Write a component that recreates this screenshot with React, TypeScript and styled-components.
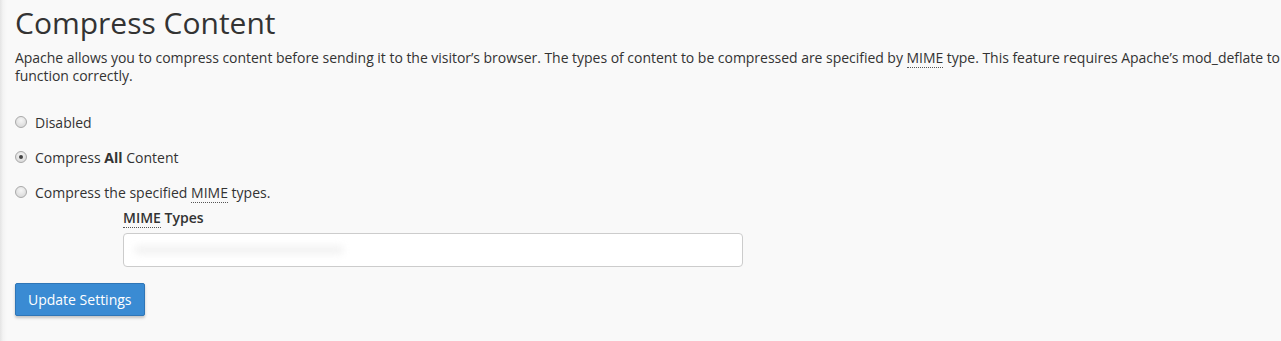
import React from "react";
import styled, { createGlobalStyle } from "styled-components";

const GlobalStyle = createGlobalStyle`
  html, body {
    margin: 0;
    padding: 0;
    overflow: hidden;
  }
  body {
    background: #f9f9f9;
    font-family: "Open Sans", "Liberation Sans", sans-serif;
    color: #333;
  }
`;

const Page = styled.div`
  width: 1281px;
  height: 341px;
  overflow: hidden;
  background: linear-gradient(to right, #e4e4e4 0px, #f3f3f3 3px, #f9f9f9 7px);
  padding: 0 0 0 15px;
  box-sizing: border-box;
`;

const Content = styled.div`
  width: 1300px;
`;

const Title = styled.h1`
  margin: 0;
  padding-top: 5px;
  font-size: 30px;
  font-weight: 400;
  line-height: 36px;
  color: #333;
`;

const Intro = styled.p`
  margin: 8px 0 0;
  font-size: 14px;
  line-height: 18px;
  letter-spacing: -0.03px;
`;

const Abbr = styled.abbr`
  text-decoration: none;
  border-bottom: 1px dotted #555;
  cursor: help;
`;

const Options = styled.div`
  display: flex;
  flex-direction: column;
  gap: 15px;
  margin-top: 27px;
`;

const Option = styled.label`
  display: flex;
  align-items: center;
  gap: 8px;
  height: 20px;
  font-size: 14px;
`;

const Radio = styled.span<{ $checked?: boolean }>`
  width: 10px;
  height: 10px;
  border-radius: 50%;
  border: 1px solid #a9a9a9;
  background: radial-gradient(circle at 50% 35%, #f6f6f6 0%, #d8d8d8 85%);
  display: flex;
  align-items: center;
  justify-content: center;
  &::after {
    content: "";
    display: ${(p) => (p.$checked ? "block" : "none")};
    width: 4px;
    height: 4px;
    border-radius: 50%;
    background: #444;
  }
`;

const Field = styled.div`
  margin: 6px 0 0 108px;
  display: flex;
  flex-direction: column;
  gap: 5px;
`;

const FieldLabel = styled.div`
  font-size: 14px;
  font-weight: 600;
  line-height: 20px;
`;

const TextBox = styled.div`
  box-sizing: border-box;
  width: 620px;
  height: 34px;
  border: 1px solid #ccc;
  border-radius: 4px;
  background: #fff;
  display: flex;
  align-items: center;
  padding-left: 10px;
`;

const Smudge = styled.span`
  width: 210px;
  height: 10px;
  border-radius: 5px;
  background: #f4f4f4;
  filter: blur(3px);
`;

const Button = styled.button`
  margin-top: 16px;
  height: 33px;
  padding: 0 12px;
  font-family: "Open Sans", "Liberation Sans", sans-serif;
  font-size: 14px;
  color: #fff;
  background: #3a8bd3;
  border: 1px solid #2f76b7;
  border-radius: 2px;
  box-shadow: 0 2px 3px rgba(0, 0, 0, 0.22);
`;

const App = () => {
  return (
    <>
      <GlobalStyle />
      <Page>
        <Content>
          <Title>Compress Content</Title>
          <Intro>
            Apache allows you to compress content before sending it to the visitor’s browser. The types of
            content to be compressed are specified by <Abbr title="Multipurpose Internet Mail Extensions">MIME</Abbr> type.
            This feature requires Apache’s mod_deflate to function correctly.
          </Intro>
          <Options>
            <Option>
              <Radio />
              Disabled
            </Option>
            <Option>
              <Radio $checked />
              <span>
                Compress <b>All</b> Content
              </span>
            </Option>
            <Option>
              <Radio />
              <span>
                Compress the specified <Abbr title="Multipurpose Internet Mail Extensions">MIME</Abbr> types.
              </span>
            </Option>
          </Options>
          <Field>
            <FieldLabel>
              <Abbr title="Multipurpose Internet Mail Extensions">MIME</Abbr> Types
            </FieldLabel>
            <TextBox>
              <Smudge />
            </TextBox>
          </Field>
          <Button>Update Settings</Button>
        </Content>
      </Page>
    </>
  );
};

export default App;
